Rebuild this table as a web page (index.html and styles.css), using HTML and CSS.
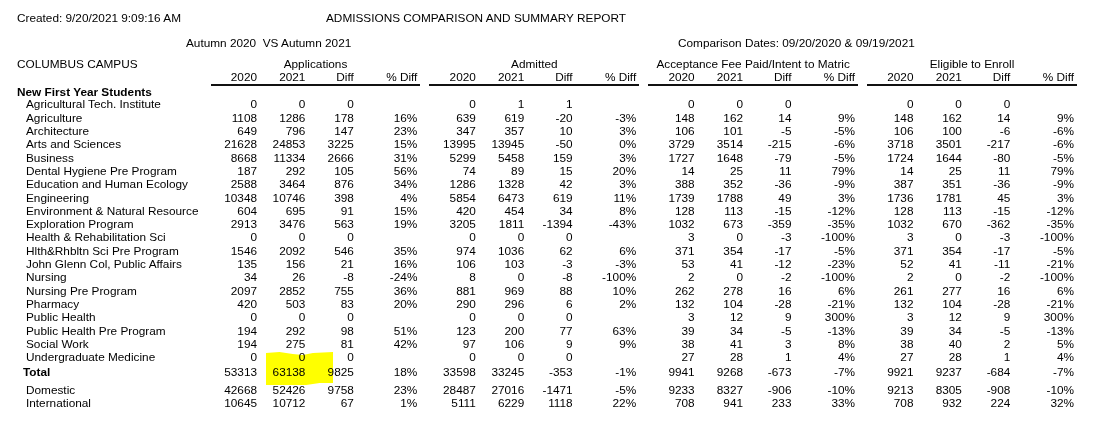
FILE: index.html
```html
<!DOCTYPE html>
<html lang="en">
<head>
<meta charset="utf-8">
<title>Admissions Comparison and Summary Report</title>
<link rel="stylesheet" href="styles.css">
</head>
<body>
<div class="page">
  <div class="line line-top">
    <span class="created">Created: 9/20/2021 9:09:16 AM</span>
    <span class="title">ADMISSIONS COMPARISON AND SUMMARY REPORT</span>
  </div>
  <div class="line line-sub">
    <span class="terms">Autumn 2020&nbsp; VS Autumn 2021</span>
    <span class="dates">Comparison Dates: 09/20/2020 &amp; 09/19/2021</span>
  </div>
  <table class="report">
    <colgroup>
      <col class="c-label">
      <col class="c-y"><col class="c-y2"><col class="c-y2"><col class="c-pct"><col class="c-sp">
      <col class="c-y"><col class="c-y2"><col class="c-y2"><col class="c-pct"><col class="c-sp">
      <col class="c-y"><col class="c-y2"><col class="c-y2"><col class="c-pct"><col class="c-sp">
      <col class="c-y"><col class="c-y2"><col class="c-y2"><col class="c-pct">
    </colgroup>
    <thead>
      <tr class="group-row">
        <th class="campus">COLUMBUS CAMPUS</th>
        <th colspan="4" class="group">Applications</th><th></th>
        <th colspan="4" class="group">Admitted</th><th></th>
        <th colspan="4" class="group">Acceptance Fee Paid/Intent to Matric</th><th></th>
        <th colspan="4" class="group">Eligible to Enroll</th>
      </tr>
      <tr class="col-row">
        <th></th>
        <th class="h">2020</th><th class="h">2021</th><th class="h">Diff</th><th class="h pct">% Diff</th><th></th>
        <th class="h">2020</th><th class="h">2021</th><th class="h">Diff</th><th class="h pct">% Diff</th><th></th>
        <th class="h">2020</th><th class="h">2021</th><th class="h">Diff</th><th class="h pct">% Diff</th><th></th>
        <th class="h">2020</th><th class="h">2021</th><th class="h">Diff</th><th class="h pct">% Diff</th>
      </tr>
    </thead>
    <tbody>
      <tr class="section"><td colspan="20">New First Year Students</td></tr>
      <tr><td class="lbl">Agricultural Tech. Institute</td><td>0</td><td>0</td><td>0</td><td class="pct"></td><td></td><td>0</td><td>1</td><td>1</td><td class="pct"></td><td></td><td>0</td><td>0</td><td>0</td><td class="pct"></td><td></td><td>0</td><td>0</td><td>0</td><td class="pct"></td></tr>
      <tr><td class="lbl">Agriculture</td><td>1108</td><td>1286</td><td>178</td><td class="pct">16%</td><td></td><td>639</td><td>619</td><td>-20</td><td class="pct">-3%</td><td></td><td>148</td><td>162</td><td>14</td><td class="pct">9%</td><td></td><td>148</td><td>162</td><td>14</td><td class="pct">9%</td></tr>
      <tr><td class="lbl">Architecture</td><td>649</td><td>796</td><td>147</td><td class="pct">23%</td><td></td><td>347</td><td>357</td><td>10</td><td class="pct">3%</td><td></td><td>106</td><td>101</td><td>-5</td><td class="pct">-5%</td><td></td><td>106</td><td>100</td><td>-6</td><td class="pct">-6%</td></tr>
      <tr><td class="lbl">Arts and Sciences</td><td>21628</td><td>24853</td><td>3225</td><td class="pct">15%</td><td></td><td>13995</td><td>13945</td><td>-50</td><td class="pct">0%</td><td></td><td>3729</td><td>3514</td><td>-215</td><td class="pct">-6%</td><td></td><td>3718</td><td>3501</td><td>-217</td><td class="pct">-6%</td></tr>
      <tr><td class="lbl">Business</td><td>8668</td><td>11334</td><td>2666</td><td class="pct">31%</td><td></td><td>5299</td><td>5458</td><td>159</td><td class="pct">3%</td><td></td><td>1727</td><td>1648</td><td>-79</td><td class="pct">-5%</td><td></td><td>1724</td><td>1644</td><td>-80</td><td class="pct">-5%</td></tr>
      <tr><td class="lbl">Dental Hygiene Pre Program</td><td>187</td><td>292</td><td>105</td><td class="pct">56%</td><td></td><td>74</td><td>89</td><td>15</td><td class="pct">20%</td><td></td><td>14</td><td>25</td><td>11</td><td class="pct">79%</td><td></td><td>14</td><td>25</td><td>11</td><td class="pct">79%</td></tr>
      <tr><td class="lbl">Education and Human Ecology</td><td>2588</td><td>3464</td><td>876</td><td class="pct">34%</td><td></td><td>1286</td><td>1328</td><td>42</td><td class="pct">3%</td><td></td><td>388</td><td>352</td><td>-36</td><td class="pct">-9%</td><td></td><td>387</td><td>351</td><td>-36</td><td class="pct">-9%</td></tr>
      <tr><td class="lbl">Engineering</td><td>10348</td><td>10746</td><td>398</td><td class="pct">4%</td><td></td><td>5854</td><td>6473</td><td>619</td><td class="pct">11%</td><td></td><td>1739</td><td>1788</td><td>49</td><td class="pct">3%</td><td></td><td>1736</td><td>1781</td><td>45</td><td class="pct">3%</td></tr>
      <tr><td class="lbl">Environment &amp; Natural Resource</td><td>604</td><td>695</td><td>91</td><td class="pct">15%</td><td></td><td>420</td><td>454</td><td>34</td><td class="pct">8%</td><td></td><td>128</td><td>113</td><td>-15</td><td class="pct">-12%</td><td></td><td>128</td><td>113</td><td>-15</td><td class="pct">-12%</td></tr>
      <tr><td class="lbl">Exploration Program</td><td>2913</td><td>3476</td><td>563</td><td class="pct">19%</td><td></td><td>3205</td><td>1811</td><td>-1394</td><td class="pct">-43%</td><td></td><td>1032</td><td>673</td><td>-359</td><td class="pct">-35%</td><td></td><td>1032</td><td>670</td><td>-362</td><td class="pct">-35%</td></tr>
      <tr><td class="lbl">Health &amp; Rehabilitation Sci</td><td>0</td><td>0</td><td>0</td><td class="pct"></td><td></td><td>0</td><td>0</td><td>0</td><td class="pct"></td><td></td><td>3</td><td>0</td><td>-3</td><td class="pct">-100%</td><td></td><td>3</td><td>0</td><td>-3</td><td class="pct">-100%</td></tr>
      <tr><td class="lbl">Hlth&amp;Rhbltn Sci Pre Program</td><td>1546</td><td>2092</td><td>546</td><td class="pct">35%</td><td></td><td>974</td><td>1036</td><td>62</td><td class="pct">6%</td><td></td><td>371</td><td>354</td><td>-17</td><td class="pct">-5%</td><td></td><td>371</td><td>354</td><td>-17</td><td class="pct">-5%</td></tr>
      <tr><td class="lbl">John Glenn Col, Public Affairs</td><td>135</td><td>156</td><td>21</td><td class="pct">16%</td><td></td><td>106</td><td>103</td><td>-3</td><td class="pct">-3%</td><td></td><td>53</td><td>41</td><td>-12</td><td class="pct">-23%</td><td></td><td>52</td><td>41</td><td>-11</td><td class="pct">-21%</td></tr>
      <tr><td class="lbl">Nursing</td><td>34</td><td>26</td><td>-8</td><td class="pct">-24%</td><td></td><td>8</td><td>0</td><td>-8</td><td class="pct">-100%</td><td></td><td>2</td><td>0</td><td>-2</td><td class="pct">-100%</td><td></td><td>2</td><td>0</td><td>-2</td><td class="pct">-100%</td></tr>
      <tr><td class="lbl">Nursing Pre Program</td><td>2097</td><td>2852</td><td>755</td><td class="pct">36%</td><td></td><td>881</td><td>969</td><td>88</td><td class="pct">10%</td><td></td><td>262</td><td>278</td><td>16</td><td class="pct">6%</td><td></td><td>261</td><td>277</td><td>16</td><td class="pct">6%</td></tr>
      <tr><td class="lbl">Pharmacy</td><td>420</td><td>503</td><td>83</td><td class="pct">20%</td><td></td><td>290</td><td>296</td><td>6</td><td class="pct">2%</td><td></td><td>132</td><td>104</td><td>-28</td><td class="pct">-21%</td><td></td><td>132</td><td>104</td><td>-28</td><td class="pct">-21%</td></tr>
      <tr><td class="lbl">Public Health</td><td>0</td><td>0</td><td>0</td><td class="pct"></td><td></td><td>0</td><td>0</td><td>0</td><td class="pct"></td><td></td><td>3</td><td>12</td><td>9</td><td class="pct">300%</td><td></td><td>3</td><td>12</td><td>9</td><td class="pct">300%</td></tr>
      <tr><td class="lbl">Public Health Pre Program</td><td>194</td><td>292</td><td>98</td><td class="pct">51%</td><td></td><td>123</td><td>200</td><td>77</td><td class="pct">63%</td><td></td><td>39</td><td>34</td><td>-5</td><td class="pct">-13%</td><td></td><td>39</td><td>34</td><td>-5</td><td class="pct">-13%</td></tr>
      <tr><td class="lbl">Social Work</td><td>194</td><td>275</td><td>81</td><td class="pct">42%</td><td></td><td>97</td><td>106</td><td>9</td><td class="pct">9%</td><td></td><td>38</td><td>41</td><td>3</td><td class="pct">8%</td><td></td><td>38</td><td>40</td><td>2</td><td class="pct">5%</td></tr>
      <tr><td class="lbl">Undergraduate Medicine</td><td>0</td><td>0</td><td>0</td><td class="pct"></td><td></td><td>0</td><td>0</td><td>0</td><td class="pct"></td><td></td><td>27</td><td>28</td><td>1</td><td class="pct">4%</td><td></td><td>27</td><td>28</td><td>1</td><td class="pct">4%</td></tr>
      <tr class="total"><td class="lbl-total">Total</td><td>53313</td><td>63138</td><td>9825</td><td class="pct">18%</td><td></td><td>33598</td><td>33245</td><td>-353</td><td class="pct">-1%</td><td></td><td>9941</td><td>9268</td><td>-673</td><td class="pct">-7%</td><td></td><td>9921</td><td>9237</td><td>-684</td><td class="pct">-7%</td></tr>
      <tr class="after-total"><td class="lbl">Domestic</td><td>42668</td><td>52426</td><td>9758</td><td class="pct">23%</td><td></td><td>28487</td><td>27016</td><td>-1471</td><td class="pct">-5%</td><td></td><td>9233</td><td>8327</td><td>-906</td><td class="pct">-10%</td><td></td><td>9213</td><td>8305</td><td>-908</td><td class="pct">-10%</td></tr>
      <tr><td class="lbl">International</td><td>10645</td><td>10712</td><td>67</td><td class="pct">1%</td><td></td><td>5111</td><td>6229</td><td>1118</td><td class="pct">22%</td><td></td><td>708</td><td>941</td><td>233</td><td class="pct">33%</td><td></td><td>708</td><td>932</td><td>224</td><td class="pct">32%</td></tr>
    </tbody>
  </table>
  <div class="highlight"></div>
</div>
</body>
</html>
```

FILE: styles.css
```css
html, body {
  margin: 0;
  padding: 0;
  background: #ffffff;
}

body {
  font-family: "Liberation Sans", Arial, sans-serif;
  font-size: 11.8px;
  color: #000000;
}

.page {
  position: relative;
  padding: 11.5px 0 0 17px;
  width: 1082px;
  height: 409px;
}

.line {
  display: flex;
  line-height: 13.3px;
  white-space: pre;
}

.line-top .created {
  width: 309px;
}

.line-sub {
  margin-top: 12.2px;
}

.line-sub .terms {
  margin-left: 169px;
  width: 492px;
}

.report {
  margin-top: 7.5px;
  border-collapse: collapse;
  border-spacing: 0;
  table-layout: fixed;
  width: 1060px;
}

.c-label { width: 192px; }
.c-y { width: 46px; }
.c-y2 { width: 48px; }
.c-pct { width: 66px; }
.c-sp { width: 9px; }

.report th,
.report td {
  padding: 0;
  line-height: 13.3px;
  font-weight: normal;
  text-align: right;
  white-space: nowrap;
  overflow: visible;
}

.report .pct {
  padding-right: 3px;
}

.report th.campus {
  text-align: left;
}

.report th.group {
  text-align: center;
}

.report tr.col-row th {
  line-height: 12.8px;
}

.report th.h {
  border-bottom: 2px solid #111111;
}

.report tr.section td {
  text-align: left;
  font-weight: bold;
  line-height: 12.6px;
}

.report td.lbl {
  text-align: left;
  padding-left: 9px;
}

.report td.lbl-total {
  text-align: left;
  padding-left: 6px;
  font-weight: bold;
}

.report tr.total td {
  padding-top: 2px;
  padding-bottom: 3.8px;
}

.report tr.total td.pct {
  padding-right: 3px;
}

.highlight {
  position: absolute;
  left: 266px;
  top: 352px;
  width: 67px;
  height: 33px;
  background: #ffff00;
  mix-blend-mode: multiply;
  clip-path: polygon(0 1px, 20% 0, 40% 2px, 55% 3px, 70% 1px, 100% 0, 100% 31px, 80% 31px, 60% 33px, 0 33px);
}
```
